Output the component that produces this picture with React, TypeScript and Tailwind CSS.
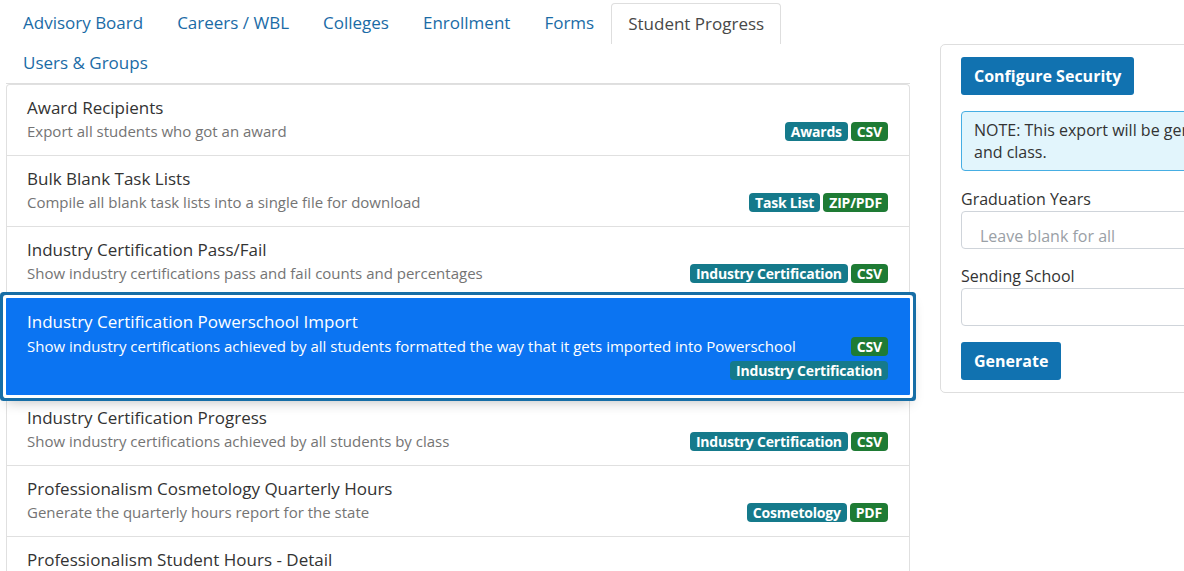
import React from 'react';

const tabs = ['Advisory Board', 'Careers / WBL', 'Colleges', 'Enrollment', 'Forms', 'Student Progress', 'Users & Groups'];

type Report = {
  title: string;
  desc: string;
  tag: string;
  kind: string;
  active?: boolean;
};

const reports: Report[] = [
  { title: 'Award Recipients', desc: 'Export all students who got an award', tag: 'Awards', kind: 'CSV' },
  { title: 'Bulk Blank Task Lists', desc: 'Compile all blank task lists into a single file for download', tag: 'Task List', kind: 'ZIP/PDF' },
  { title: 'Industry Certification Pass/Fail', desc: 'Show industry certifications pass and fail counts and percentages', tag: 'Industry Certification', kind: 'CSV' },
  {
    title: 'Industry Certification Powerschool Import',
    desc: 'Show industry certifications achieved by all students formatted the way that it gets imported into Powerschool',
    tag: 'Industry Certification',
    kind: 'CSV',
    active: true,
  },
  { title: 'Industry Certification Progress', desc: 'Show industry certifications achieved by all students by class', tag: 'Industry Certification', kind: 'CSV' },
  { title: 'Professionalism Cosmetology Quarterly Hours', desc: 'Generate the quarterly hours report for the state', tag: 'Cosmetology', kind: 'PDF' },
  { title: 'Professionalism Student Hours - Detail', desc: 'Show hours logged per student in detail', tag: 'Professionalism', kind: 'CSV' },
];

function Badge({ children, green }: { children: React.ReactNode; green?: boolean }) {
  return (
    <span
      className={`inline-block rounded-[4px] px-[6px] h-[19px] leading-[19px] text-[14px] font-bold text-white tracking-[-0.2px] ${
        green ? 'bg-[#1e7b34]' : 'bg-[#157a8b]'
      }`}
    >
      {children}
    </span>
  );
}

function ReportRow({ r }: { r: Report }) {
  if (r.active) {
    // selected row: ring + lifted shadow, badges wrap under the long description
    return (
      <div className="relative z-10 -mx-px rounded-[1px] bg-[#0b74f2] text-white pl-[21px] pr-[22px] pt-3 pb-[15px] shadow-[0_0_0_3px_#ffffff,0_0_0_6px_#176ea6,0_6px_14px_rgba(0,0,0,0.28)]">
        <div className="text-[17px] leading-6">{r.title}</div>
        <div className="flex justify-between items-center">
          <div className="text-[15px] leading-6">{r.desc}</div>
          <Badge green>{r.kind}</Badge>
        </div>
        <div className="flex justify-end mt-[3px]">
          <Badge>{r.tag}</Badge>
        </div>
      </div>
    );
  }
  return (
    <div className="flex justify-between items-end border-b border-[#e0e0e0] pl-5 pr-[21px] pt-[10px] pb-[13px]">
      <div>
        <div className="text-[17px] leading-[25px] text-[#333333]">{r.title}</div>
        <div className="text-[15px] leading-[22px] text-[#747474]">{r.desc}</div>
      </div>
      <div className="flex gap-[3px] mb-[1px] shrink-0">
        <Badge>{r.tag}</Badge>
        <Badge green>{r.kind}</Badge>
      </div>
    </div>
  );
}

export default function App() {
  return (
    <div
      className="w-[1184px] h-[571px] overflow-hidden bg-white"
      style={{ fontFamily: '"Open Sans", "Liberation Sans", sans-serif' }}
    >
      <div className="flex gap-[30px] pl-[6px] pt-[3px]">
        {/* Left: tabs + report list */}
        <div className="w-[904px] shrink-0">
          <nav className="flex flex-wrap border-b border-[#dedede]">
            {tabs.map((t) =>
              t === 'Student Progress' ? (
                <div
                  key={t}
                  className="px-4 py-2 text-[17px] leading-6 text-[#484848] border border-b-0 border-[#dedede] rounded-t-[4px] bg-white -mb-px"
                >
                  {t}
                </div>
              ) : (
                <div key={t} className="px-[17px] py-2 text-[17px] leading-6 text-[#1a6ba6]">
                  {t}
                </div>
              )
            )}
          </nav>
          <div className="border border-[#e0e0e0] border-b-0 rounded-t-[4px]">
            {reports.map((r) => (
              <ReportRow key={r.title} r={r} />
            ))}
          </div>
        </div>

        {/* Right: export options */}
        <div className="w-[330px] shrink-0 pt-[41px]">
          <div className="border border-[#dedede] rounded-[5px] px-5 pt-3 pb-3">
            <button className="bg-[#1172b0] text-white font-bold text-[16px] leading-6 rounded-[3px] px-[13px] py-[7px]">
              Configure Security
            </button>
            <div className="mt-4 bg-[#e2f5fc] border border-[#46aee3] rounded-[4px] px-3 py-[7px] text-[16px] leading-[22px] text-[#333333] whitespace-nowrap">
              NOTE: This export will be generated by graduation year
              <br />
              and class.
            </div>
            <div className="mt-4 text-[16px] leading-6 text-[#333333]">Graduation Years</div>
            <div className="h-[38px] border border-[#cfd4da] rounded-[4px] pl-[18px] pt-3 text-[16px] leading-6 text-[#9aa0a6]">
              Leave blank for all
            </div>
            <div className="mt-[15px] text-[16px] leading-6 text-[#333333]">Sending School</div>
            <div className="h-[38px] border border-[#cfd4da] rounded-[4px]" />
            <button className="mt-4 bg-[#1172b0] text-white font-bold text-[16px] leading-6 rounded-[3px] px-[13px] py-[7px]">
              Generate
            </button>
          </div>
        </div>
      </div>
    </div>
  );
}
